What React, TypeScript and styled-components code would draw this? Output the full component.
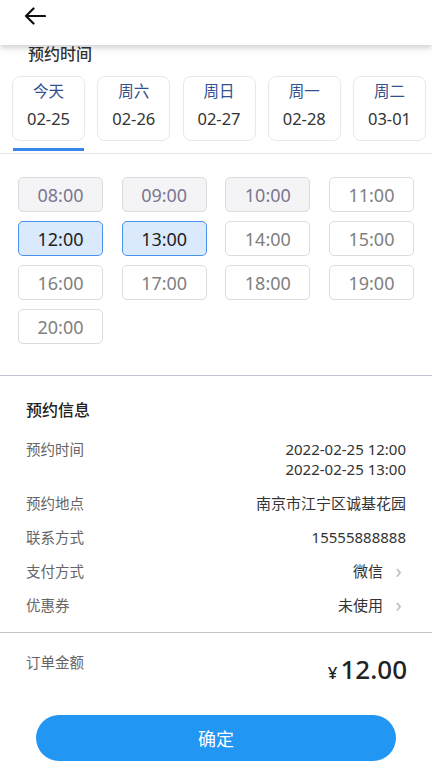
import React, { useState } from 'react';
import styled, { createGlobalStyle } from 'styled-components';

const GlobalStyle = createGlobalStyle`
  * { box-sizing: border-box; }
  body {
    margin: 0;
    background: #fff;
    font-family: 'Noto Sans', 'Noto Sans CJK SC', sans-serif;
  }
`;

const days = [
  { label: '今天', date: '02-25' },
  { label: '周六', date: '02-26' },
  { label: '周日', date: '02-27' },
  { label: '周一', date: '02-28' },
  { label: '周二', date: '03-01' },
];

const slots = ['08:00', '09:00', '10:00', '11:00', '12:00', '13:00', '14:00', '15:00', '16:00', '17:00', '18:00', '19:00', '20:00'];
const disabledSlots = ['08:00', '09:00', '10:00'];

type SlotState = 'disabled' | 'selected' | 'normal';

function App() {
  const [activeDay, setActiveDay] = useState(0);
  const [selected, setSelected] = useState<string[]>(['12:00', '13:00']);

  const toggle = (s: string) => {
    if (disabledSlots.includes(s)) return;
    setSelected(prev => (prev.includes(s) ? prev.filter(x => x !== s) : [...prev, s]));
  };

  return (
    <Root>
      <GlobalStyle />
      <Header>
        <BackButton>
          <svg width="22" height="18" viewBox="0 0 22 18" fill="none">
            <path d="M21 9H2M9.5 1.5L2 9l7.5 7.5" stroke="#111" strokeWidth="2.2" strokeLinecap="round" strokeLinejoin="round" />
          </svg>
        </BackButton>
      </Header>
      <SectionTitle>预约时间</SectionTitle>
      <DayTabs>
        {days.map((d, i) => (
          <DayTab key={d.date} $active={i === activeDay} onClick={() => setActiveDay(i)}>
            <DayLabel>{d.label}</DayLabel>
            <DayDate>{d.date}</DayDate>
          </DayTab>
        ))}
      </DayTabs>
      <SlotGrid>
        {slots.map(s => {
          const state: SlotState = disabledSlots.includes(s) ? 'disabled' : selected.includes(s) ? 'selected' : 'normal';
          return (
            <Slot key={s} $state={state} onClick={() => toggle(s)}>
              {s}
            </Slot>
          );
        })}
      </SlotGrid>
      <Info>
        <InfoTitle>预约信息</InfoTitle>
        <InfoRow>
          <Label>预约时间</Label>
          <Value>
            <div>2022-02-25 12:00</div>
            <div>2022-02-25 13:00</div>
          </Value>
        </InfoRow>
        <InfoRow>
          <Label>预约地点</Label>
          <Value>南京市江宁区诚基花园</Value>
        </InfoRow>
        <InfoRow>
          <Label>联系方式</Label>
          <Value>15555888888</Value>
        </InfoRow>
        <InfoRow>
          <Label>支付方式</Label>
          <LinkValue>
            微信<Chevron>›</Chevron>
          </LinkValue>
        </InfoRow>
        <InfoRow>
          <Label>优惠券</Label>
          <LinkValue>
            未使用<Chevron>›</Chevron>
          </LinkValue>
        </InfoRow>
      </Info>
      <Total>
        <Label>订单金额</Label>
        <Amount>
          <Yen>¥</Yen>12.00
        </Amount>
      </Total>
      <ConfirmButton>确定</ConfirmButton>
    </Root>
  );
}

export default App;

const Root = styled.div`
  width: 432px;
  min-height: 768px;
  background: #fff;
  display: flex;
  flex-direction: column;
`;
const Header = styled.header`
  height: 45px;
  display: flex;
  align-items: center;
  padding-left: 24px;
  padding-bottom: 14px;
  background: #fff;
  box-shadow: 0 3px 6px rgba(0, 0, 0, 0.18);
  position: relative;
  z-index: 1;
`;
const BackButton = styled.div`
  display: flex;
  width: 22px;
  height: 18px;
`;
const SectionTitle = styled.h2`
  margin: 0;
  padding-left: 28px;
  font-size: 16px;
  line-height: 18px;
  font-weight: 500;
  color: #333;
`;
const DayTabs = styled.div`
  margin-top: 13px;
  padding: 0 6px 0 12px;
  display: grid;
  grid-template-columns: repeat(5, 73px);
  justify-content: space-between;
  border-bottom: 1px solid #e6e6e6;
`;
const DayTab = styled.div<{ $active: boolean }>`
  position: relative;
  height: 65px;
  margin-bottom: 12px;
  padding-top: 4px;
  border: 1px solid #e8e8e8;
  border-radius: 8px;
  display: flex;
  flex-direction: column;
  align-items: center;
  gap: 8px;
  cursor: pointer;
  &::after {
    content: '';
    display: ${p => (p.$active ? 'block' : 'none')};
    position: absolute;
    left: 0;
    right: 0;
    bottom: -11px;
    height: 3px;
    background: #3a86e8;
  }
`;
const DayLabel = styled.div`
  font-size: 15.5px;
  line-height: 20px;
  color: #34508f;
`;
const DayDate = styled.div`
  font-size: 16.5px;
  line-height: 20px;
  color: #333;
`;
const SlotGrid = styled.div`
  display: grid;
  grid-template-columns: repeat(4, 85px);
  justify-content: space-between;
  row-gap: 9px;
  padding: 23px 18px 31px;
  border-bottom: 1px solid #bfc3cf;
`;
const Slot = styled.div<{ $state: SlotState }>`
  height: 35px;
  border-radius: 5px;
  display: flex;
  align-items: center;
  justify-content: center;
  font-size: 18px;
  cursor: pointer;
  border: 1px solid ${p => (p.$state === 'selected' ? '#4b93ea' : '#dcdcdc')};
  background: ${p => (p.$state === 'selected' ? '#dbe9fd' : p.$state === 'disabled' ? '#f4f4f6' : '#fff')};
  color: ${p => (p.$state === 'selected' ? '#1f1f1f' : p.$state === 'disabled' ? '#7b7690' : '#808080')};
`;
const Info = styled.section`
  padding: 25px 26px 17px;
  border-bottom: 1px solid #c3c3cb;
  display: flex;
  flex-direction: column;
  gap: 14px;
`;
const InfoTitle = styled.h3`
  margin: 0 0 6px;
  font-size: 16px;
  line-height: 18px;
  font-weight: 500;
  color: #222;
`;
const InfoRow = styled.div`
  display: flex;
  justify-content: space-between;
  align-items: flex-start;
`;
const Label = styled.div`
  font-size: 14.5px;
  line-height: 20px;
  color: #666;
`;
const Value = styled.div`
  font-size: 15px;
  line-height: 20px;
  text-align: right;
  color: #333;
`;
const LinkValue = styled(Value)`
  display: flex;
  align-items: center;
`;
const Chevron = styled.span`
  margin-left: 8px;
  font-size: 20px;
  line-height: 20px;
  color: #bdbdbd;
  width: 15px;
  text-align: center;
`;
const Total = styled.div`
  display: flex;
  justify-content: space-between;
  align-items: flex-start;
  padding: 19px 25px 0 26px;
`;
const Amount = styled.div`
  font-size: 26px;
  line-height: 34px;
  color: #222;
  font-weight: 500;
`;
const Yen = styled.span`
  font-size: 17px;
  margin-right: 3px;
`;
const ConfirmButton = styled.button`
  margin: 25px auto 0;
  width: 360px;
  height: 46px;
  border: none;
  border-radius: 23px;
  background: #2196f3;
  color: #fff;
  font-family: 'Noto Sans CJK SC', sans-serif;
  font-size: 18px;
`;
